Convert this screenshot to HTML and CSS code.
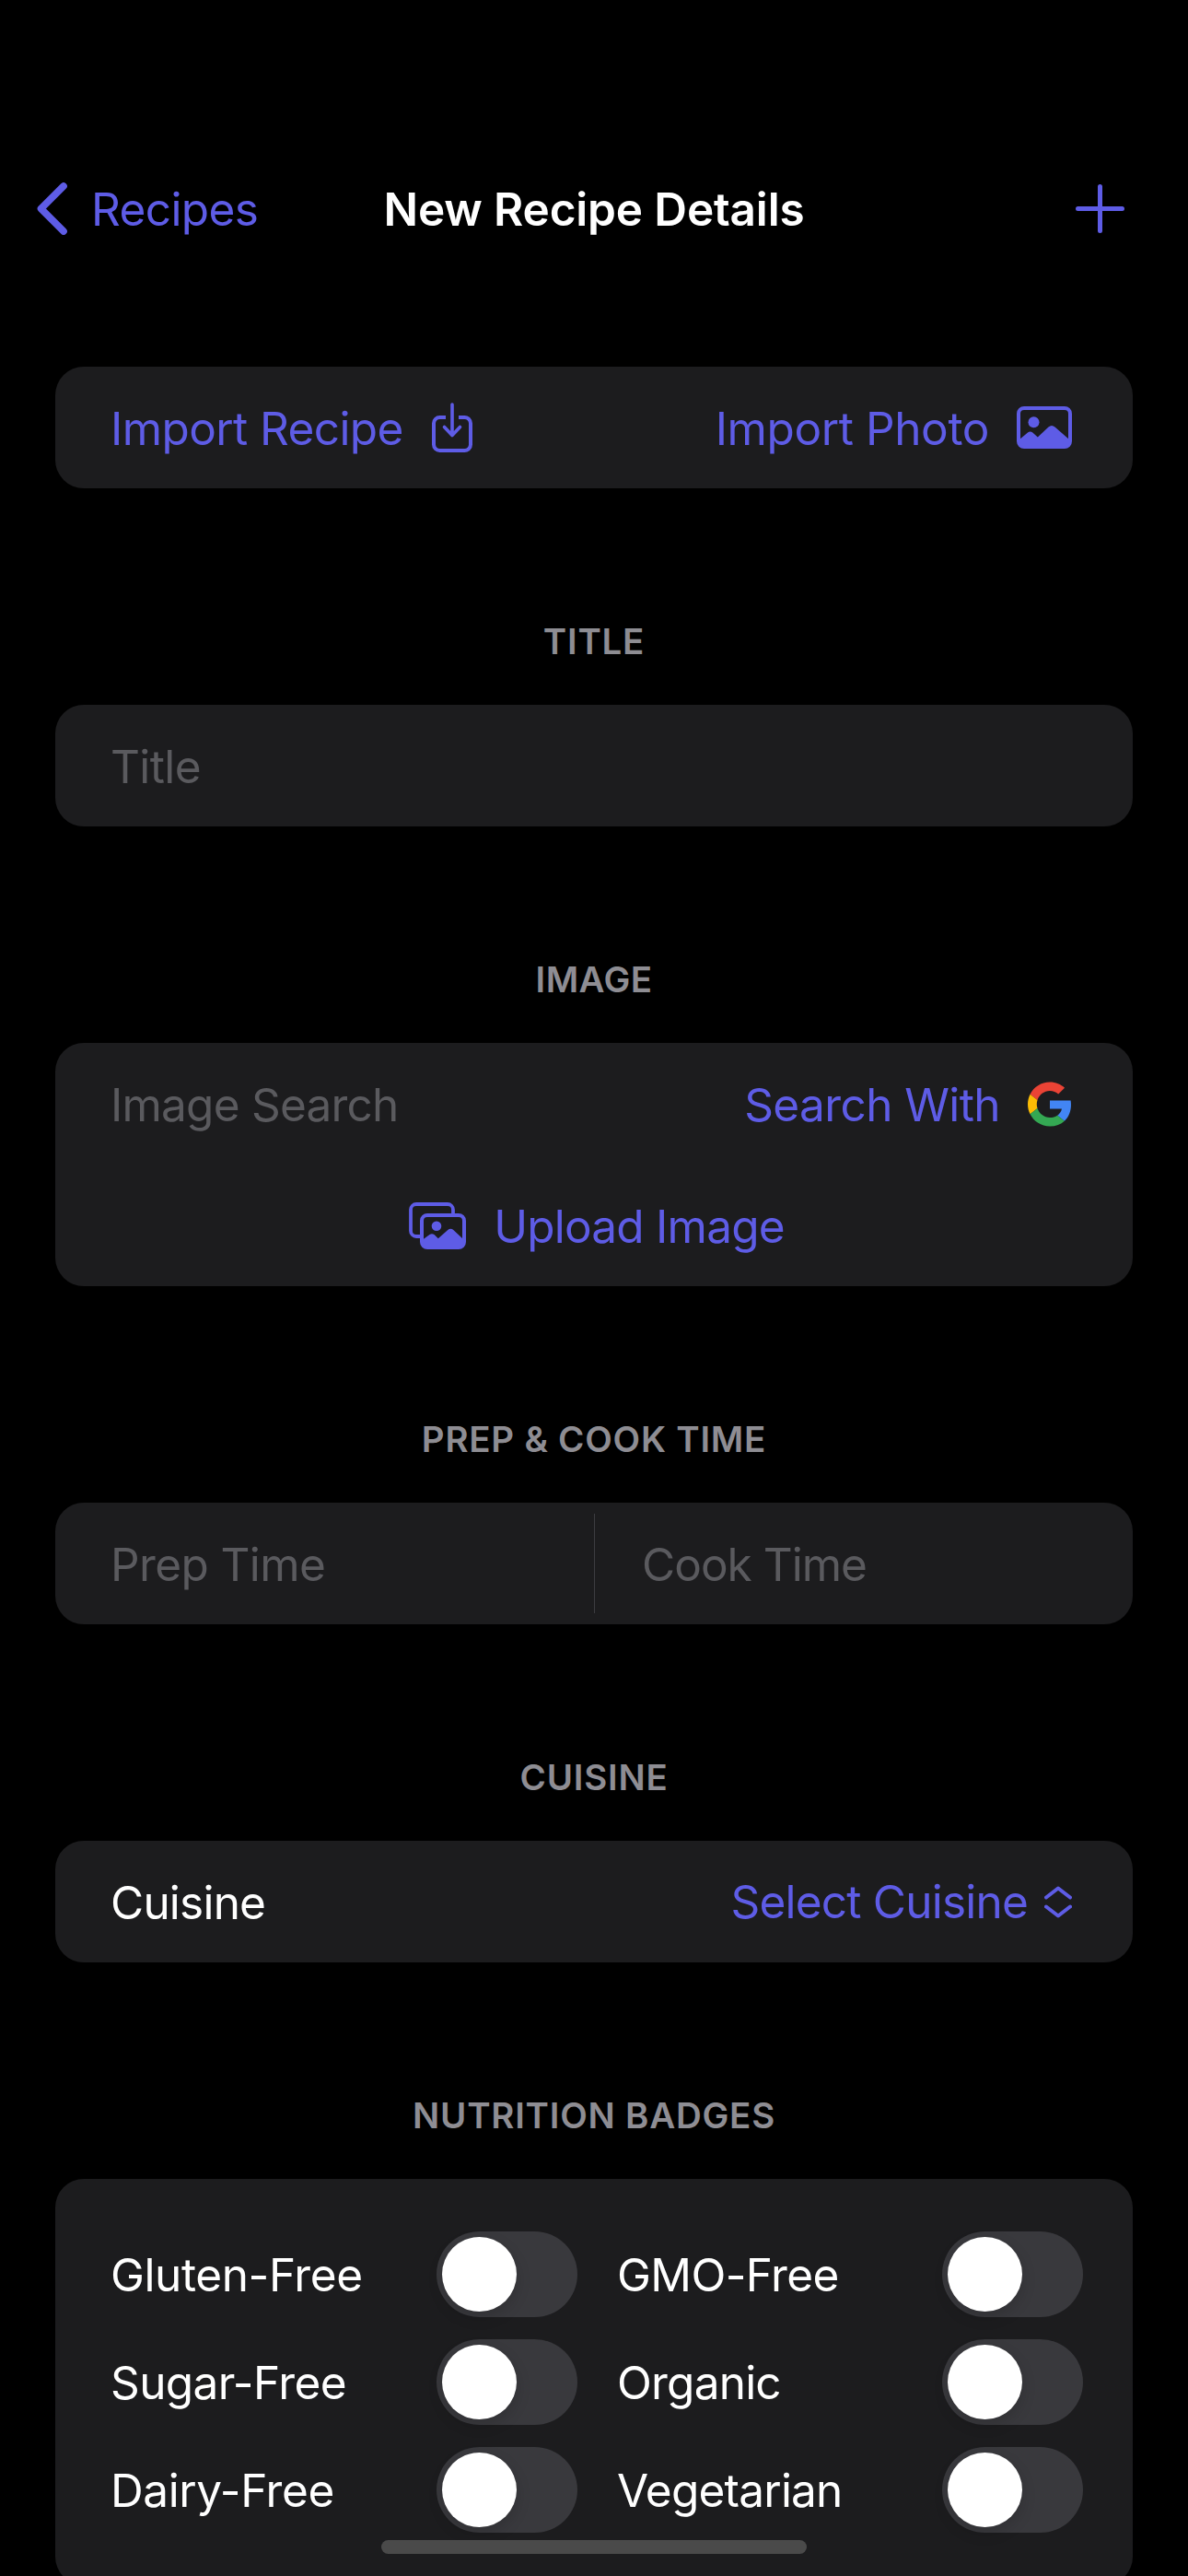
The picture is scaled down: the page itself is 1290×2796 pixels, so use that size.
FILE: index.html
```html
<!DOCTYPE html>
<html lang="en">
<head>
  <meta charset="utf-8">
  <title>New Recipe Details</title>
  <link rel="stylesheet" href="styles.css">
</head>
<body>
  <div class="screen">
    <header class="nav">
      <a class="nav-back">
        <svg class="icon" width="33" height="57" viewBox="0 0 33 57"><path d="M29 4 4.500 28.500 29 53" stroke-width="7.600"/></svg>
        <span>Recipes</span>
      </a>
      <h1 class="nav-title">New Recipe Details</h1>
      <a class="nav-add">
        <svg class="icon" width="53" height="53" viewBox="0 0 53 53"><path d="M26.500 2.500v48M2.500 26.500h48" stroke-width="5"/></svg>
      </a>
    </header>

    <main>
      <div class="card row">
        <a class="action import">
          <span>Import Recipe</span>
          <svg class="icon" width="44" height="54" viewBox="0 0 44 54"><path d="M15 16H8.500a6.500 6.500 0 0 0-6.500 6.500v23a6.500 6.500 0 0 0 6.500 6.500h27a6.500 6.500 0 0 0 6.500-6.500v-23a6.500 6.500 0 0 0-6.500-6.500H29" stroke-width="4" stroke-linecap="butt"/><path d="M22 2v33M13.500 26.500 22 35.500l8.500-9" stroke-width="3.600"/></svg>
        </a>
        <a class="action">
          <span class="loose">Import Photo</span>
          <svg class="icon" width="60" height="46" viewBox="0 0 60 46"><rect x="2" y="2" width="56" height="42" rx="6" stroke-width="4"/><circle class="solid" cx="18.500" cy="17.300" r="6"/><path class="solid" d="M3 36l9-7.500q2.700-2 5.300 0l5.500 5 11.700-11q3.500-3 7 0L57 36v4l-3 4H6l-3-4z"/></svg>
        </a>
      </div>

      <h2 class="section-title">TITLE</h2>
      <div class="card row"><span class="placeholder">Title</span></div>

      <h2 class="section-title plain">IMAGE</h2>
      <div class="card">
        <div class="row">
          <span class="placeholder tight">Image Search</span>
          <a class="action">
            <span>Search With</span>
            <svg class="google" width="48" height="49" viewBox="0 0 48 48">
              <path fill="#EA4335" d="M24 9.500c3.540 0 6.710 1.220 9.210 3.600l6.850-6.850C35.900 2.380 30.470 0 24 0 14.620 0 6.510 5.380 2.560 13.220l7.980 6.190C12.430 13.720 17.740 9.500 24 9.500z"/>
              <path fill="#4285F4" d="M46.980 24.550c0-1.570-.15-3.090-.38-4.550H24v9.020h12.940c-.58 2.960-2.260 5.480-4.780 7.180l7.730 6c4.510-4.180 7.090-10.360 7.090-17.650z"/>
              <path fill="#FBBC05" d="M10.530 28.590c-.48-1.450-.76-2.990-.76-4.590s.27-3.140.76-4.590l-7.980-6.190C.92 16.460 0 20.120 0 24c0 3.880.92 7.540 2.560 10.780l7.970-6.190z"/>
              <path fill="#34A853" d="M24 48c6.480 0 11.930-2.130 15.890-5.810l-7.730-6c-2.150 1.450-4.920 2.300-8.160 2.300-6.260 0-11.570-4.220-13.470-9.910l-7.980 6.190C6.510 42.620 14.620 48 24 48z"/>
            </svg>
          </a>
        </div>
        <div class="row upload">
          <a class="action">
            <svg class="icon" width="62" height="51" viewBox="0 0 62 51"><path d="M12 37H8a6 6 0 0 1-6-6V8a6 6 0 0 1 6-6h34a6 6 0 0 1 6 6v5" stroke-width="3.800" stroke-linecap="butt"/><rect x="14" y="14" width="46" height="35" rx="6" stroke-width="4"/><circle class="solid" cx="30" cy="25.700" r="5.300"/><path class="solid" d="M15 40.500l7.500-5.500q2.500-1.700 5 0l4.300 4.200 10.200-9q3.300-2.700 6.600 0L59 40v5l-3 4H18l-3-4z"/></svg>
            <span class="tight">Upload Image</span>
          </a>
        </div>
      </div>

      <h2 class="section-title">PREP &amp; COOK TIME</h2>
      <div class="card times">
        <span class="time placeholder">Prep Time</span>
        <span class="divider"></span>
        <span class="time placeholder tighter">Cook Time</span>
      </div>

      <h2 class="section-title">CUISINE</h2>
      <div class="card row">
        <span class="label tight">Cuisine</span>
        <a class="action select">
          <span class="tight">Select Cuisine</span>
          <svg class="icon" width="30" height="35" viewBox="0 0 30 35"><path d="M2 12.500 15 2.500l13 10M2 22.500l13 10 13-10" stroke-width="4"/></svg>
        </a>
      </div>

      <h2 class="section-title">NUTRITION BADGES</h2>
      <div class="card badges">
        <div class="badge"><span class="loose">Gluten-Free</span><span class="toggle"></span></div>
        <div class="badge"><span>GMO-Free</span><span class="toggle"></span></div>
        <div class="badge"><span>Sugar-Free</span><span class="toggle"></span></div>
        <div class="badge"><span class="tight">Organic</span><span class="toggle"></span></div>
        <div class="badge"><span class="loose">Dairy-Free</span><span class="toggle"></span></div>
        <div class="badge"><span class="tight">Vegetarian</span><span class="toggle"></span></div>
      </div>
    </main>

    <div class="home-indicator"></div>
  </div>
</body>
</html>
```
FILE: styles.css
```css
* {
  box-sizing: border-box;
}

:root {
  --accent: #5e5ce6;
  --card: #1c1c1e;
  --placeholder: #5a5a5e;
  --heading: #8e8d93;
}

body {
  margin: 0;
  background: #000;
  color: #fff;
  font-family: Inter, "Liberation Sans", sans-serif;
  font-size: 49.5px;
  line-height: 60px;
  letter-spacing: -0.6px;
  white-space: nowrap;
}

.screen {
  position: relative;
  height: 2796px;
  overflow: hidden;
}

.tight { letter-spacing: -0.78px; }
.tighter { letter-spacing: -0.98px; }
.loose { letter-spacing: -0.4px; }

.icon {
  display: block;
  flex: none;
  fill: none;
  stroke: var(--accent);
  stroke-linecap: round;
  stroke-linejoin: round;
}

.icon .solid {
  fill: var(--accent);
  stroke: none;
}

.google {
  display: block;
}

/* Navigation bar */

.nav {
  display: grid;
  grid-template-columns: 1fr auto 1fr;
  align-items: center;
  height: 398px;
  padding: 161px 69px 106px 40px;
}

.nav-back {
  display: flex;
  align-items: center;
  gap: 26px;
  color: var(--accent);
}

.nav-title {
  margin: 0 0 0 29px;
  font-size: 49.5px;
  font-weight: 600;
  letter-spacing: -0.15px;
}

.nav-add {
  justify-self: end;
}

/* Grouped form */

.section-title {
  height: 235px;
  margin: 0;
  padding-top: 136px;
  color: var(--heading);
  font-size: 38.5px;
  font-weight: 600;
  letter-spacing: 0.76px;
  text-align: center;
}

.section-title.plain { letter-spacing: 0.4px; }

.card {
  margin: 0 60px;
  border-radius: 31px;
  background: var(--card);
}

.row {
  display: flex;
  align-items: center;
  justify-content: space-between;
  height: 132px;
  padding: 0 66px 0 60px;
}

.card > .row {
  margin: 0;
}

.action {
  display: flex;
  align-items: center;
  gap: 30px;
  color: var(--accent);
}

.import {
  gap: 31px;
}

.action span,
.placeholder,
.label {
  padding-top: 2px;
}

.placeholder {
  color: var(--placeholder);
}

.upload {
  justify-content: center;
  padding: 0 0 0 6px;
}

.select {
  gap: 18px;
}

.select span {
  padding-top: 0;
}

.times {
  display: grid;
  grid-template-columns: 585px 1px 1fr;
  align-items: center;
  height: 132px;
}

.time {
  padding-left: 60px;
}

.divider + .time {
  padding-left: 51px;
}

.divider {
  height: 108px;
  background: #3d3d41;
}

.badges {
  display: grid;
  grid-template-columns: 507px 506px;
  gap: 24px 43px;
  padding: 57px 54px 57px 60px;
}

.badge {
  display: flex;
  align-items: center;
  justify-content: space-between;
}

.toggle {
  display: flex;
  width: 153px;
  height: 93px;
  padding: 6px;
  border-radius: 47px;
  background: #39393d;
}

.toggle::before {
  width: 81px;
  height: 81px;
  border-radius: 50%;
  background: #fff;
  box-shadow: 0 6px 16px rgba(0, 0, 0, 0.15);
  content: "";
}

.home-indicator {
  position: absolute;
  left: 414px;
  bottom: 24px;
  width: 462px;
  height: 15px;
  border-radius: 8px;
  background: #4a4a4a;
}
```
